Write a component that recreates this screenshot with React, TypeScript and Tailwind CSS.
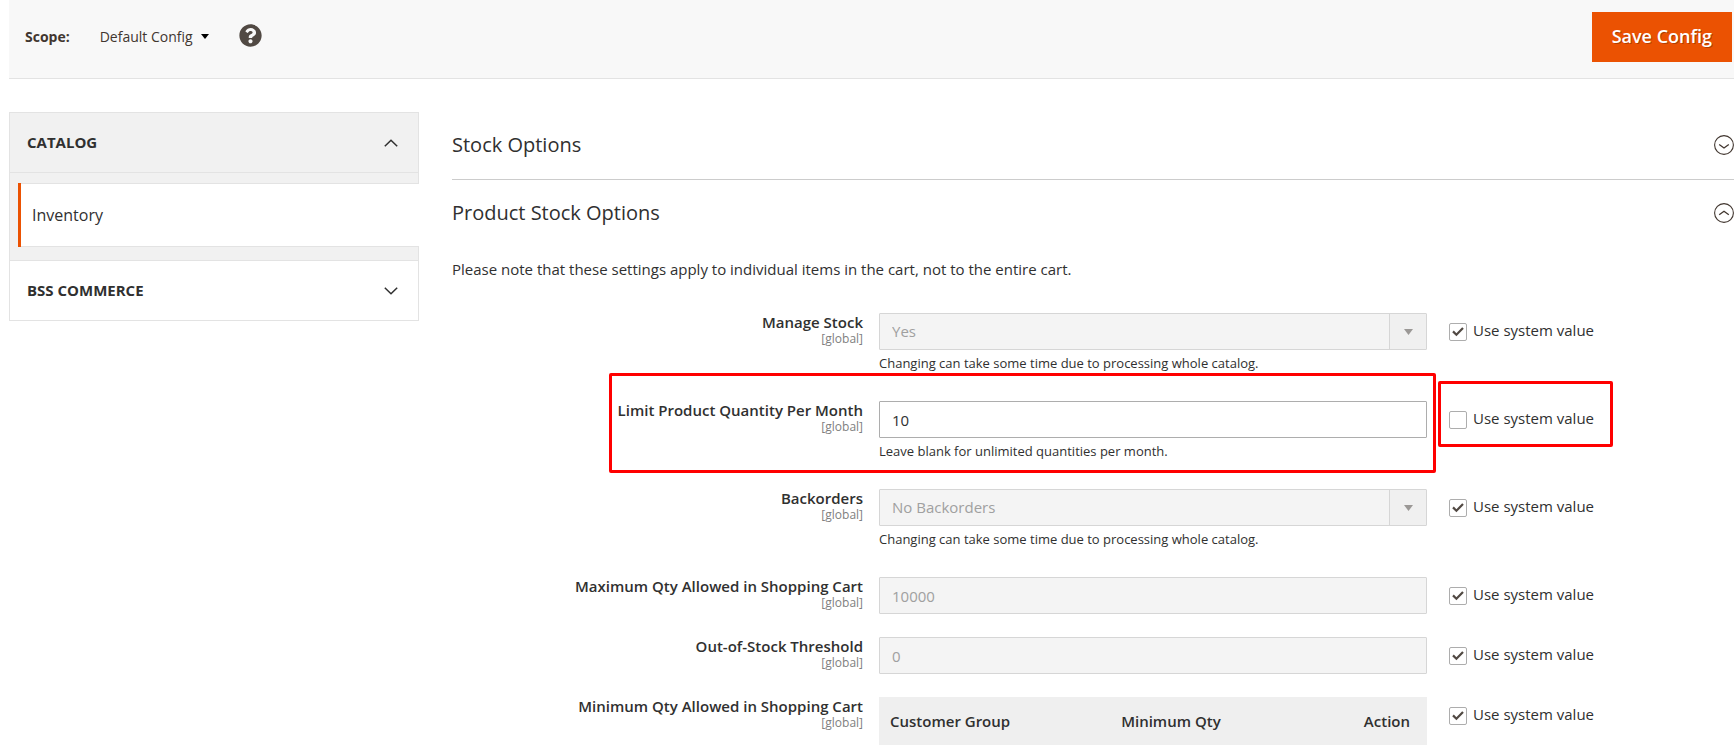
import { useState, type ReactNode } from "react";
import { FaQuestionCircle } from "react-icons/fa";
import { clsx } from "clsx";

type Field = {
    id: string;
    label: string;
    kind: "select" | "text" | "table";
    value?: string;
    note?: string;
    system: boolean;
    marked?: boolean;
};

const fields: Field[] = [
    { id: "manage_stock", label: "Manage Stock", kind: "select", value: "Yes", note: "Changing can take some time due to processing whole catalog.", system: true },
    { id: "limit_qty", label: "Limit Product Quantity Per Month", kind: "text", value: "10", note: "Leave blank for unlimited quantities per month.", system: false, marked: true },
    { id: "backorders", label: "Backorders", kind: "select", value: "No Backorders", note: "Changing can take some time due to processing whole catalog.", system: true },
    { id: "max_sale_qty", label: "Maximum Qty Allowed in Shopping Cart", kind: "text", value: "10000", system: true },
    { id: "min_qty", label: "Out-of-Stock Threshold", kind: "text", value: "0", system: true },
    { id: "min_sale_qty", label: "Minimum Qty Allowed in Shopping Cart", kind: "table", system: true },
];

function Chevron({ up }: { up?: boolean }) {
    return (
        <svg viewBox="0 0 14 8" className="h-2 w-3.5" fill="none" stroke="currentColor" strokeWidth="1.5">
            <path d={up ? "M.8 7.2 7 1.2l6.2 6" : "M.8.8 7 6.8l6.2-6"} />
        </svg>
    );
}

function CircleChevron({ up }: { up?: boolean }) {
    return (
        <svg viewBox="0 0 20 20" className="size-5 shrink-0" fill="none" stroke="#41362f">
            <circle cx="10" cy="10" r="9.4" strokeWidth="1.1" />
            <path d={up ? "M5.2 11.8 10 8.2l4.8 3.6" : "M5.2 9.4 10 13l4.8-3.6"} strokeWidth="1.3" />
        </svg>
    );
}

function SectionTitle({ children, open }: { children: ReactNode; open?: boolean }) {
    return (
        <h2>
            <button type="button" aria-expanded={!!open} className="flex w-full items-center justify-between text-left text-xl leading-[26px] font-medium">
                {children}
                <CircleChevron up={open} />
            </button>
        </h2>
    );
}

function Control({ field, disabled }: { field: Field; disabled: boolean }) {
    const box = clsx(
        "block h-[37px] w-full appearance-none rounded-[1px] border px-3 text-[15px]",
        disabled ? "border-[#d6d6d6] bg-[#f4f4f4] text-[#a0a0a0] opacity-100" : "border-[#adadad] bg-white text-[#303030]"
    );

    if (field.kind === "table") {
        return (
            <table id={field.id} className="w-full bg-[#efefef] text-left text-[15px]">
                <thead>
                    <tr className="h-12">
                        <th className="w-[42%] px-[11px] font-semibold">Customer Group</th>
                        <th className="px-3 font-semibold">Minimum Qty</th>
                        <th className="px-[17px] text-right font-semibold">Action</th>
                    </tr>
                </thead>
            </table>
        );
    }

    if (field.kind === "select") {
        return (
            <div className="relative">
                <select id={field.id} disabled={disabled} className={box}>
                    <option>{field.value}</option>
                </select>
                <span className="pointer-events-none absolute inset-y-px right-px flex w-[37px] items-center justify-center border-l border-[#d6d6d6] bg-[#f0f0f0]">
                    <svg viewBox="0 0 9 6" className="h-1.5 w-[9px]" fill="#9b9896">
                        <path d="M0 0h9L4.5 6z" />
                    </svg>
                </span>
            </div>
        );
    }

    return <input id={field.id} type="text" defaultValue={field.value} disabled={disabled} className={box} />;
}

function FieldRow({ field }: { field: Field }) {
    const [system, setSystem] = useState(field.system);

    return (
        <div className="grid grid-cols-[427fr_548fr_307fr]">
            <label htmlFor={field.id} className="pr-4 text-right whitespace-nowrap">
                <span className="block text-[15px] leading-[18px] font-semibold">{field.label}</span>
                <span className="block text-xs leading-4 text-[#808080]">[global]</span>
            </label>
            <div className="relative">
                <Control field={field} disabled={system} />
                {field.note && <p className="pt-1 text-[13px] leading-[18px]">{field.note}</p>}
                {field.marked && (
                    <span className="pointer-events-none absolute -top-7 -right-[9px] -left-[270px] h-[100px] rounded-xs border-3 border-[#ff0000]" />
                )}
            </div>
            <div className="pt-2 pl-[22px]">
                <label className="relative inline-flex gap-1.5 text-[15px] leading-[18px]">
                    <span className="relative mt-0.5 size-[18px]">
                        <input
                            type="checkbox"
                            checked={system}
                            onChange={(e) => setSystem(e.target.checked)}
                            className="peer block size-[18px] appearance-none rounded-xs border border-[#adadad] bg-white"
                        />
                        <svg viewBox="0 0 18 18" className="pointer-events-none absolute inset-0 hidden peer-checked:block" fill="none" stroke="#514943" strokeWidth="2.2">
                            <path d="m4 8.4 3.4 3.4L14 5" />
                        </svg>
                    </span>
                    Use system value
                    {field.marked && (
                        <span className="pointer-events-none absolute -top-7 -right-[19px] -left-[11px] h-[66px] rounded-xs border-3 border-[#ff0000]" />
                    )}
                </label>
            </div>
        </div>
    );
}

export default function App() {
    return (
        <div className="bg-white pl-[9px] font-['Open_Sans',sans-serif] text-[#303030]">
            <header className="flex h-[79px] items-start justify-between border-b border-[#e3e3e3] bg-[#f8f8f8] pt-3 pr-0.5 pl-4">
                <div className="flex items-center pt-3 text-sm">
                    <span className="pt-0.5 font-bold text-[#41362f]">Scope:</span>
                    <button type="button" className="ml-[30px] flex items-center gap-2 pt-0.5 text-[#41362f]">
                        Default Config
                        <svg viewBox="0 0 8 5" className="h-[5px] w-2" fill="#000">
                            <path d="M0 0h8L4 5z" />
                        </svg>
                    </button>
                    <a href="#help" aria-label="Help" className="ml-[30px] text-[23px] text-[#514943]">
                        <FaQuestionCircle />
                    </a>
                </div>
                <button type="button" className="h-[50px] bg-[#eb5202] px-5 pb-0.5 text-lg font-semibold text-white [text-shadow:1px_1px_0_rgba(0,0,0,.25)]">
                    Save Config
                </button>
            </header>

            <div className="flex items-start gap-[33px] pt-[33px]">
                <nav className="w-[410px] shrink-0 border border-[#e3e3e3] text-[15px]">
                    <button type="button" className="flex h-[60px] w-full items-center justify-between border-b border-[#e3e3e3] bg-[#f1f1f1] pr-5 pl-[17px] font-bold">
                        CATALOG
                        <Chevron up />
                    </button>
                    <div className="bg-[#f1f1f1] pt-2.5 pb-[13px] pl-2">
                        <a href="#inventory" className="-mr-px flex h-16 items-center border-y border-[#e3e3e3] bg-white text-base font-medium">
                            <span className="flex h-16 items-center border-l-3 border-[#eb5202] pl-[11px]">Inventory</span>
                        </a>
                    </div>
                    <button type="button" className="flex h-[60px] w-full items-center justify-between border-t border-[#e3e3e3] bg-white pr-5 pl-[17px] font-bold">
                        BSS COMMERCE
                        <Chevron />
                    </button>
                </nav>

                <main className="min-w-0 flex-1">
                    <div className="border-b border-[#cccccc] pt-5 pb-[21px]">
                        <SectionTitle>Stock Options</SectionTitle>
                    </div>
                    <div className="pt-5">
                        <SectionTitle open>Product Stock Options</SectionTitle>
                        <p className="pt-[34px] pb-[34px] text-[15px] leading-[19px]">
                            Please note that these settings apply to individual items in the cart, not to the entire cart.
                        </p>
                        <div className="flex flex-col">
                            {fields.map((field) => (
                                <div key={field.id} className={field.note ? "pb-[29px]" : field.kind === "text" ? "pb-[23px]" : ""}>
                                    <FieldRow field={field} />
                                </div>
                            ))}
                        </div>
                    </div>
                </main>
            </div>
        </div>
    );
}
